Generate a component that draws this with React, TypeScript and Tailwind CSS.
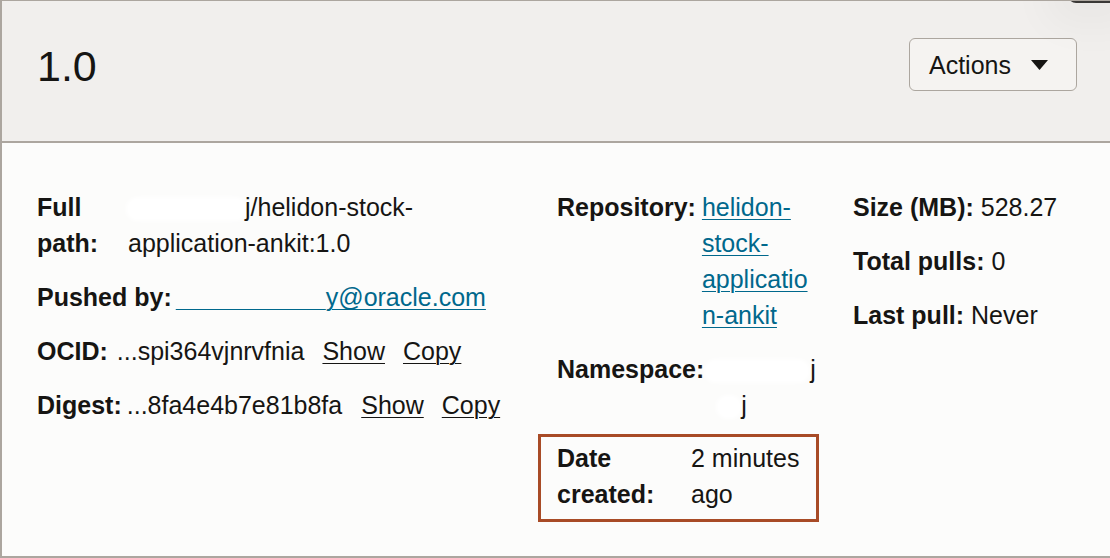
import React from "react";

const Label = ({ children }: { children: React.ReactNode }) => (
  <span className="font-bold">{children}</span>
);

const Redacted = ({ w }: { w: string }) => (
  <span className={`inline-block h-[20px] align-[-3px] rounded-full bg-white shadow-[0_0_4px_2px_#ffffff] ${w}`} />
);

const TextLink = ({ children }: { children: React.ReactNode }) => (
  <a href="#" className="underline decoration-1 underline-offset-[3px] text-[#161513]">
    {children}
  </a>
);

export default function App() {
  return (
    <div
      className="relative flex h-[558px] w-[1110px] flex-col overflow-hidden border-t border-b-2 border-l-2 border-[#aca69f] bg-[#fcfcfb] text-[25px] leading-[36px] text-[#161513]"
      style={{ fontFamily: '"Liberation Sans", Arial, sans-serif' }}
    >
      <div className="absolute top-[-6px] right-0 h-[8px] w-[42px] rounded-bl-lg bg-[#3a3836] shadow-[0_0_40px_24px_rgba(0,0,0,0.035)]" />

      <header className="flex h-[142px] shrink-0 items-start justify-between border-b-2 border-[#aca69f] bg-[#f1efed] pt-[37px] pl-[35px] pr-[33px]">
        <h1 className="mt-[7px] text-[43px] leading-none font-normal">1.0</h1>
        <button className="flex h-[53px] w-[168px] items-center justify-between rounded-[6px] border border-[#aca69f] bg-[#f5f3f1] pl-[19px] pr-[28px] text-[25px]">
          <span>Actions</span>
          <svg width="17" height="10" viewBox="0 0 17 10">
            <path d="M0 0h17L8.5 10z" fill="#161513" />
          </svg>
        </button>
      </header>

      <div className="flex flex-1 pt-[46px]">
        {/* left column */}
        <div className="flex w-[536px] shrink-0 flex-col gap-[18px] pl-[35px]">
          <div className="flex">
            <div className="w-[91px] shrink-0 font-bold">
              <div>Full</div>
              <div>path:</div>
            </div>
            <div>
              <div>
                <Redacted w="w-[117px]" />
                <span>j/helidon-stock-</span>
              </div>
              <div>application-ankit:1.0</div>
            </div>
          </div>
          <div>
            <Label>Pushed by:</Label>
            <a href="#" className="ml-[4px] text-[#00688c] underline decoration-1 decoration-[#00688c] underline-offset-[3px]">
              <span className="text-transparent">xxxxxxxxxxxx</span>y@oracle.com
            </a>
          </div>
          <div className="flex items-baseline">
            <Label>OCID:</Label>
            <span className="ml-[9px]">...spi364vjnrvfnia</span>
            <span className="ml-[18px]"><TextLink>Show</TextLink></span>
            <span className="ml-[18px]"><TextLink>Copy</TextLink></span>
          </div>
          <div className="flex items-baseline">
            <Label>Digest:</Label>
            <span className="ml-[5px]">...8fa4e4b7e81b8fa</span>
            <span className="ml-[19px]"><TextLink>Show</TextLink></span>
            <span className="ml-[18px]"><TextLink>Copy</TextLink></span>
          </div>
        </div>

        {/* middle column */}
        <div className="flex w-[315px] shrink-0 flex-col">
          <div className="flex pl-[19px]">
            <span className="font-bold">Repository:</span>
            <a href="#" className="ml-[6px] text-[#00688c] underline decoration-1 underline-offset-[3px]">
              <span className="block">helidon-</span>
              <span className="block">stock-</span>
              <span className="block">applicatio</span>
              <span className="block">n-ankit</span>
            </a>
          </div>
          <div className="mt-[18px] flex pl-[19px]">
            <span className="font-bold">Namespace:</span>
            <div className="ml-[2px]">
              <div>
                <Redacted w="w-[102px]" />
                <span className="ml-[2px]">j</span>
              </div>
              <div className="pl-[12px]">
                <Redacted w="w-[22px]" />
                <span className="ml-[1px]">j</span>
              </div>
            </div>
          </div>
          <div className="mt-[11px] flex h-[88px] w-[281px] border-[3px] border-[#a84b26] pt-[3px] pl-[16px]">
            <div className="w-[134px] shrink-0 font-bold">
              <div>Date</div>
              <div>created:</div>
            </div>
            <div>
              <div>2 minutes</div>
              <div>ago</div>
            </div>
          </div>
        </div>

        {/* right column */}
        <div className="flex flex-col gap-[18px]">
          <div>
            <Label>Size (MB):</Label> 528.27
          </div>
          <div>
            <Label>Total pulls:</Label> 0
          </div>
          <div>
            <Label>Last pull:</Label> Never
          </div>
        </div>
      </div>
    </div>
  );
}
